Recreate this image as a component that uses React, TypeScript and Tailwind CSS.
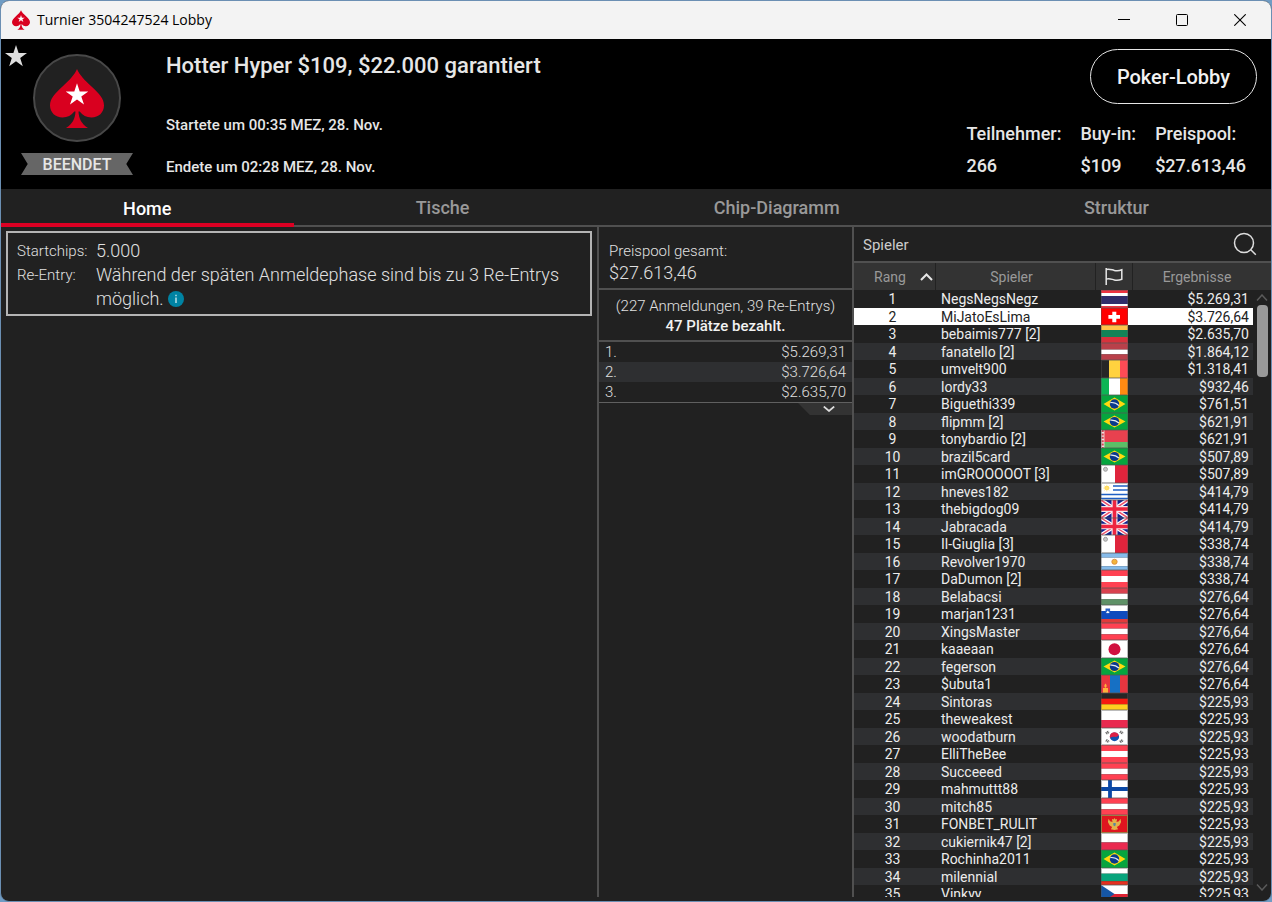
import type { ReactNode } from 'react';

type Player = [name: string, flag: string, result: string];

const players: Player[] = [
  ['NegsNegsNegz', 'th', '$5.269,31'],
  ['MiJatoEsLima', 'ch', '$3.726,64'],
  ['bebaimis777 [2]', 'lt', '$2.635,70'],
  ['fanatello [2]', 'lv', '$1.864,12'],
  ['umvelt900', 'be', '$1.318,41'],
  ['lordy33', 'ie', '$932,46'],
  ['Biguethi339', 'br', '$761,51'],
  ['flipmm [2]', 'br', '$621,91'],
  ['tonybardio [2]', 'by', '$621,91'],
  ['brazil5card', 'br', '$507,89'],
  ['imGROOOOOT [3]', 'mt', '$507,89'],
  ['hneves182', 'uy', '$414,79'],
  ['thebigdog09', 'gb', '$414,79'],
  ['Jabracada', 'gb', '$414,79'],
  ['Il-Giuglia [3]', 'mt', '$338,74'],
  ['Revolver1970', 'ar', '$338,74'],
  ['DaDumon [2]', 'at', '$338,74'],
  ['Belabacsi', 'hu', '$276,64'],
  ['marjan1231', 'si', '$276,64'],
  ['XingsMaster', 'at', '$276,64'],
  ['kaaeaan', 'jp', '$276,64'],
  ['fegerson', 'br', '$276,64'],
  ['$ubuta1', 'mn', '$276,64'],
  ['Sintoras', 'de', '$225,93'],
  ['theweakest', 'pl', '$225,93'],
  ['woodatburn', 'kr', '$225,93'],
  ['ElliTheBee', 'at', '$225,93'],
  ['Succeeed', 'at', '$225,93'],
  ['mahmuttt88', 'fi', '$225,93'],
  ['mitch85', 'at', '$225,93'],
  ['FONBET_RULIT', 'me', '$225,93'],
  ['cukiernik47 [2]', 'pl', '$225,93'],
  ['Rochinha2011', 'br', '$225,93'],
  ['milennial', 'bg', '$225,93'],
  ['Vinkyy', 'cz', '$225,93'],
];

const prizes = [
  ['1.', '$5.269,31'],
  ['2.', '$3.726,64'],
  ['3.', '$2.635,70'],
];

/* Horizontal stripes, each given as [height, colour]. */
function stripes(...bands: [number, string][]) {
  let y = 0;
  return bands.map(([h, c], i) => {
    const r = <rect key={i} x="0" y={y} width="27" height={h} fill={c} />;
    y += h;
    return r;
  });
}

const flags: Record<string, ReactNode> = {
  th: stripes([3, '#ef3340'], [3, '#fff'], [8, '#312d69'], [2, '#fff'], [2, '#ef3340']),
  ch: (
    <>
      <rect width="27" height="18" fill="#ff0000" />
      <path d="M11.3 4h4v3.4H19v4h-3.7V15h-4v-3.6H7.4v-4h3.9z" fill="#fff" />
    </>
  ),
  lt: stripes([5, '#ffc24a'], [7, '#128357'], [6, '#d8323c']),
  lv: stripes([7, '#b9404a'], [5, '#fff'], [6, '#b9404a']),
  be: (
    <>
      <rect width="8" height="18" fill="#262626" />
      <rect x="8" width="11" height="18" fill="#ffd23f" />
      <rect x="19" width="8" height="18" fill="#ff4b55" />
    </>
  ),
  ie: (
    <>
      <rect width="8" height="18" fill="#0cb555" />
      <rect x="8" width="11" height="18" fill="#fff" />
      <rect x="19" width="8" height="18" fill="#ff8a12" />
    </>
  ),
  br: (
    <>
      <rect width="27" height="18" fill="#06a53e" />
      <path d="M2.5 9L13.5 2.6 24.5 9 13.5 15.4z" fill="#ffd90f" />
      <circle cx="13.5" cy="9" r="4.7" fill="#0a3a8c" />
      <path d="M9.3 7.6q5-.6 8.6 3" stroke="#e6ecf4" strokeWidth="1.2" fill="none" />
    </>
  ),
  by: (
    <>
      {stripes([12, '#e8414f'], [6, '#5cbf67'])}
      <rect width="3.4" height="18" fill="#f0e0e0" />
      <path d="M1.7 0v18" stroke="#d64551" strokeWidth="2" strokeDasharray="2 1.4" />
    </>
  ),
  mt: (
    <>
      <rect width="14" height="18" fill="#fff" />
      <rect x="14" width="13" height="18" fill="#df243c" />
      <circle cx="4.5" cy="4.3" r="2" fill="#c9c9c9" stroke="#999" strokeWidth=".9" />
    </>
  ),
  uy: (
    <>
      <rect width="27" height="18" fill="#fff" />
      <path d="M12 3.2h15M12 7.4h15M0 12.2h27M0 16.4h27" stroke="#1f5fc4" strokeWidth="1.7" />
      <circle cx="5.8" cy="5.4" r="2.4" fill="#ffd84d" />
      <path d="M5.8 1.8v7.2M2.2 5.4h7.2M3.2 2.8l5.2 5.2M8.4 2.8L3.2 8" stroke="#ffe27a" strokeWidth=".7" />
    </>
  ),
  gb: (
    <>
      <rect width="27" height="18" fill="#11228f" />
      <path d="M0 0l27 18M27 0L0 18" stroke="#fff" strokeWidth="4" />
      <path d="M0 0l27 18M27 0L0 18" stroke="#f0506a" strokeWidth="1.5" />
      <path d="M13.5 0v18M0 9h27" stroke="#f7e3e8" strokeWidth="6" />
      <path d="M13.5 0v18M0 9h27" stroke="#ee2440" strokeWidth="3.6" />
    </>
  ),
  ar: (
    <>
      {stripes([5, '#86bbea'], [9, '#fff'], [4, '#86bbea'])}
      <circle cx="13.5" cy="9.3" r="2.7" fill="#f2b53c" stroke="#d9853a" strokeWidth=".8" />
    </>
  ),
  at: stripes([6, '#ff4152'], [6, '#fff'], [6, '#ff4152']),
  hu: stripes([6, '#d9414f'], [6, '#fff'], [6, '#5f9167']),
  si: (
    <>
      {stripes([6, '#fff'], [8, '#0f4bbd'], [4, '#e23a3a'])}
      <path d="M4.5 3.6h4.6v3.2q0 2-2.3 2.8-2.3-.8-2.3-2.8z" fill="#2c62c4" />
      <path d="M5 8l1.8-2.6L8.6 8z" fill="#fff" />
    </>
  ),
  jp: (
    <>
      <rect width="27" height="18" fill="#fff" />
      <circle cx="13.5" cy="9.3" r="6" fill="#d0103f" />
    </>
  ),
  mn: (
    <>
      <rect width="27" height="18" fill="#e8353f" />
      <rect x="9" width="10" height="18" fill="#1670c4" />
      <path d="M4.5 8.5q2.4 2.6 0 4.4-2.4-1.8 0-4.4zM2 13h5v5H2z" fill="#ffb03a" />
    </>
  ),
  de: stripes([6, '#262626'], [6, '#f51a10'], [6, '#ffcf1f']),
  pl: stripes([10, '#fff'], [8, '#e9294f']),
  kr: (
    <>
      <rect width="27" height="18" fill="#fff" />
      <circle cx="13.5" cy="9.3" r="4.6" fill="#1353ad" />
      <path d="M9 10.5a4.6 4.6 0 1 1 8.8-2.8q-1.8 2.2-4.3 1.6T9 10.5z" fill="#dd2045" />
      <path d="M5 5.8l3-2M19 3.8l3 2M5 12.8l3 2M19 14.8l3-2" stroke="#666" strokeWidth="2.8" strokeDasharray="1.2 .5" />
    </>
  ),
  fi: (
    <>
      <rect width="27" height="18" fill="#fff" />
      <path d="M9 0v18M0 9h27" stroke="#0a48a5" strokeWidth="3.8" />
    </>
  ),
  me: (
    <>
      <rect width="27" height="18" fill="#c9963f" />
      <rect x="1" y="1" width="25" height="16" fill="#e0151f" />
      <path d="M13.5 3l1 1.5 1.6-.6-.6 3 2.4-.6 1.6-2.6.6 3.4-1.8 3.4-2.4 1.6 1.2 2.2-3.6.6-3.6-.6 1.2-2.2-2.4-1.6-1.8-3.4.6-3.4 1.6 2.6 2.4.6-.6-3 1.6.6z" fill="#e3b24a" />
      <path d="M12.3 8h2.4v2.2l-1.2 1-1.2-1z" fill="#5b86a0" />
    </>
  ),
  bg: stripes([6, '#fff'], [8, '#08a47c'], [4, '#e4301f']),
  cz: (
    <>
      {stripes([9, '#fff'], [9, '#dd2233'])}
      <path d="M0 0l13.5 9L0 18z" fill="#1556a5" />
    </>
  ),
};

function Flag({ code }: { code: string }) {
  return (
    <svg viewBox="0 0 27 18" preserveAspectRatio="none" className="block h-full w-[27px]" aria-hidden="true">
      {flags[code]}
      <rect x=".5" y=".5" width="26" height="17" fill="none" stroke="#555" strokeOpacity=".4" />
    </svg>
  );
}

function Spade({ className }: { className: string }) {
  return (
    <svg viewBox="0 0 54 59" className={className} aria-hidden="true">
      <path
        d="M27 0C24.500 6 19 11.500 12.500 17.500 5 24.500 0 29.500 0 36.500 0 43.500 5.500 48.500 12.500 48.500c5 0 9-2.300 11.800-6h1.200C25.200 49.500 22.500 55 16 59h22c-6.500-4-9.200-9.500-9.500-16.500h1.200c2.800 3.700 6.800 6 11.800 6C48.500 48.500 54 43.500 54 36.500c0-7-5-12-12.500-19C35 11.500 29.500 6 27 0z"
        fill="#d9001f"
      />
      <path
        d="M27 14.2l2.700 8.200h8.600l-7 5 2.700 8.200-7-5.100-7 5.100 2.700-8.200-7-5h8.600z"
        fill="#fff"
      />
    </svg>
  );
}

function TitleBar() {
  const button = 'flex h-full w-[58px] items-center justify-center';
  return (
    <div className="flex h-[38px] shrink-0 items-center bg-[#f3f3f3] pl-[11px] pr-0.5 text-black">
      <Spade className="h-5 w-[18px]" />
      <h1 className="ml-[7px] font-['Open_Sans','Noto_Sans',sans-serif] text-sm">Turnier 3504247524 Lobby</h1>
      <div className="ml-auto flex h-full">
        <button type="button" aria-label="Minimieren" className={button}>
          <svg viewBox="0 0 12 12" className="size-3" stroke="currentColor" fill="none">
            <path d="M0 5.5h12" />
          </svg>
        </button>
        <button type="button" aria-label="Maximieren" className={button}>
          <svg viewBox="0 0 12 12" className="size-3" stroke="currentColor" fill="none">
            <rect x=".5" y=".5" width="11" height="11" rx="1" />
          </svg>
        </button>
        <button type="button" aria-label="Schließen" className={button}>
          <svg viewBox="0 0 12 12" className="size-3" stroke="currentColor" strokeWidth="1.1" fill="none">
            <path d="M.3.3l11.4 11.4M11.7.3L.3 11.7" />
          </svg>
        </button>
      </div>
    </div>
  );
}

function Stat({ label, value }: { label: string; value: string }) {
  return (
    <div>
      <dt>{label}</dt>
      <dd>{value}</dd>
    </div>
  );
}

function Header() {
  return (
    <header className="flex h-[150px] shrink-0 bg-black font-medium text-[#e6e6e6]">
      <button type="button" aria-label="Favorit" className="ml-1 mt-1.5 self-start">
        <svg viewBox="0 0 22 22" className="size-[22px]" fill="#dedede">
          <path d="M11 0l2.6 8H22l-6.8 5 2.6 8.3L11 16.3l-6.8 5L6.800 13 0 8h8.400z" />
        </svg>
      </button>
      <div className="-ml-[6px] flex w-[112px] flex-col items-center pt-[15px]">
        <div className="flex size-[88px] items-center justify-center rounded-full border-2 border-[#484848] bg-[#212121]">
          <Spade className="h-[59px] w-[54px]" />
        </div>
        <div className="mt-[11px] flex h-[22px] w-full items-center justify-center bg-[#666] pt-0.5 text-base leading-none [clip-path:polygon(0_0,100%_0,94%_50%,100%_100%,0_100%,6%_50%)]">
          BEENDET
        </div>
      </div>
      <div className="ml-[33px] pt-[15px]">
        <h2 className="text-[22px] leading-6">Hotter Hyper $109, $22.000 garantiert</h2>
        <p className="mt-[35px] text-[15px] leading-6">Startete um 00:35 MEZ, 28. Nov.</p>
        <p className="mt-[18px] text-[15px] leading-6">Endete um 02:28 MEZ, 28. Nov.</p>
      </div>
      <div className="ml-auto flex flex-col items-end pt-[10px]">
        <button
          type="button"
          className="mr-[14px] h-[55px] rounded-[28px] border border-[#e6e6e6] px-[26px] text-xl text-[#f2f2f2]"
        >
          Poker-Lobby
        </button>
        <dl className="mr-[25px] mt-[14px] flex gap-[19px] text-lg leading-8">
          <Stat label="Teilnehmer:" value="266" />
          <Stat label="Buy-in:" value="$109" />
          <Stat label="Preispool:" value="$27.613,46" />
        </dl>
      </div>
    </header>
  );
}

function Tabs() {
  const rest = 'flex-auto border-b-2 border-[#505050] pt-0.5 text-[#999]';
  return (
    <nav className="flex h-[38px] shrink-0 pr-0.5 text-lg font-medium">
      <button type="button" className="flex-auto border-b-4 border-[#dc0023] pt-1.5 text-white">Home</button>
      <button type="button" className={rest}>Tische</button>
      <button type="button" className={rest}>Chip-Diagramm</button>
      <button type="button" className={`${rest} -mr-0.5`}>Struktur</button>
    </nav>
  );
}

function InfoPanel() {
  return (
    <section className="min-w-0 flex-1 px-[5px] pt-1">
      <dl className="grid grid-cols-[79px_1fr] border-2 border-[#b4b4b4] px-[9px] pb-[3px] pt-1.5 font-light text-[#e0e0e0]">
        <dt className="text-[15px] leading-6">Startchips:</dt>
        <dd className="text-lg leading-6">5.000</dd>
        <dt className="text-[15px] leading-6">Re-Entry:</dt>
        <dd className="text-lg leading-6">
          Während der späten Anmeldephase sind bis zu 3 Re-Entrys möglich.
          <button type="button" aria-label="Info" className="ml-1 inline-block h-4 align-[-2px]">
            <svg viewBox="0 0 16 16" className="size-4">
              <circle cx="8" cy="8" r="8" fill="#0083a3" />
              <path d="M8 6.5v5.500M8 3.800v1.400" stroke="#d5eef3" strokeWidth="1.3" />
            </svg>
          </button>
        </dd>
      </dl>
    </section>
  );
}

function PrizePanel() {
  return (
    <section className="w-[257px] shrink-0 border-x-2 border-[#505050] font-light text-[#e0e0e0]">
      <div className="border-b-2 border-[#505050] pb-1 pl-[10px] pt-[13px]">
        <p className="text-[15px] leading-[22px]">Preispool gesamt:</p>
        <p className="text-lg leading-[22px]">$27.613,46</p>
      </div>
      <div className="border-b-2 border-[#505050] pb-1 pt-1.5 text-center text-[15px] leading-5">
        <p>(227 Anmeldungen, 39 Re-Entrys)</p>
        <p className="font-medium text-[#f2f2f2]">47 Plätze bezahlt.</p>
      </div>
      <table className="w-full text-[15px] leading-5">
        <tbody>
          {prizes.map(([place, sum]) => (
            <tr key={place} className="h-5 even:bg-[#2e2f31]">
              <td className="pl-[6px]">{place}</td>
              <td className="pr-[6px] text-right">{sum}</td>
            </tr>
          ))}
        </tbody>
      </table>
      <div className="flex justify-end border-t border-[#606060]">
        <button
          type="button"
          aria-label="Mehr anzeigen"
          className="flex h-3 w-[54px] items-center justify-center bg-[#333] pl-2 [clip-path:polygon(0_0,100%_0,100%_100%,22%_100%)]"
        >
          <svg viewBox="0 0 12 6" className="h-1.5 w-3" fill="none" stroke="#ddd" strokeWidth="1.7">
            <path d="M.8.5L6 5 11.2.5" />
          </svg>
        </button>
      </div>
    </section>
  );
}

function PlayerPanel() {
  return (
    <section className="flex w-[417px] shrink-0 flex-col overflow-hidden">
      <div className="flex h-[34px] shrink-0 items-center justify-between pl-[9px] pr-[14px]">
        <h3 className="pt-0.5 text-[15px] text-[#ccc]">Spieler</h3>
        <button type="button" aria-label="Suchen">
          <svg viewBox="0 0 24 24" className="size-6" fill="none" stroke="#ddd" strokeWidth="1.5">
            <circle cx="11" cy="11" r="9.5" />
            <path d="M17.8 17.8l5 5" />
          </svg>
        </button>
      </div>
      <div className="relative min-h-0 flex-1 overflow-hidden border-t-2 border-[#505050]">
        <table className="w-full table-fixed border-separate border-spacing-0">
          <colgroup>
            <col className="w-[82px]" />
            <col className="w-[160px]" />
            <col className="w-[37px]" />
            <col />
            <col className="w-[18px]" />
          </colgroup>
          <thead>
            <tr className="h-[27px] bg-[#333] text-sm text-[#999] *:border-r *:border-[#222] *:p-0 *:font-normal">
              <th scope="col">
                <button type="button" className="flex w-full items-center gap-[14px] pl-5">
                  Rang
                  <svg viewBox="0 0 13 8" className="h-2 w-[13px]" fill="none" stroke="#e6e6e6" strokeWidth="2">
                    <path d="M1 7l5.5-5.5L12 7" />
                  </svg>
                </button>
              </th>
              <th scope="col">
                <span className="pr-2">Spieler</span>
              </th>
              <th scope="col">
                <svg viewBox="0 0 18 17" className="ml-[9px] h-[17px] w-[18px]" fill="none" stroke="#e6e6e6" strokeWidth="1.5" role="img" aria-label="Land">
                  <path d="M1.2 0v17M1.2 1.5c3-1 5 .2 8 .9 2.5.6 5 .5 7.6-.6v9.5c-2.6 1-5.1 1.2-7.6.6-3-.7-5-1.8-8-.8" />
                </svg>
              </th>
              <th scope="col" colSpan={2} className="!border-r-0">
                <span className="pr-[10px]">Ergebnisse</span>
              </th>
            </tr>
          </thead>
          <tbody className="text-sm text-[#ececec]">
            {players.map(([name, flag, result], i) => {
              const selected = i === 1;
              const odd = i % 2 === 0;
              const height = odd ? 'h-[18px]' : 'h-[17px]';
              const line = odd ? 'leading-[17px]' : 'pt-px leading-4';
              const tone = selected ? 'bg-white text-[#222]' : odd ? '' : 'bg-[#2e2f31]';
              const cell = `${height} ${line} ${tone}`;
              return (
                <tr key={name}>
                  <td className={`${cell} pr-[5px] text-center`}>{i + 1}</td>
                  <td className={`${cell} pl-[5px]`}>{name}</td>
                  <td className={`${height} ${tone} p-0`}>
                    <div className={`${height} pl-[5px]`}>
                      <Flag code={flag} />
                    </div>
                  </td>
                  <td className={`${cell} pr-1 text-right`}>{result}</td>
                  <td className={`${height} p-0`} />
                </tr>
              );
            })}
          </tbody>
        </table>
        <div className="absolute bottom-0 right-0 top-[27px] flex w-[18px] flex-col items-center pb-[6px] pt-[4px]">
          <svg viewBox="0 0 12 7" className="h-[7px] w-3" fill="none" stroke="#5a5a5a" strokeWidth="1.5">
            <path d="M1 6.5l5-5.5 5 5.5" />
          </svg>
          <div className="mt-[4px] h-[72px] w-[11px] rounded-[4px] bg-[#999]" />
          <svg viewBox="0 0 12 7" className="mt-auto h-[7px] w-3" fill="none" stroke="#5a5a5a" strokeWidth="1.5">
            <path d="M1 .5L6 6l5-5.5" />
          </svg>
        </div>
      </div>
    </section>
  );
}

export default function App() {
  return (
    <div className="h-screen bg-[#6f9cc4] font-[Roboto,'Liberation_Sans',sans-serif]">
      <div className="flex h-full flex-col overflow-hidden rounded-[9px] border border-[#6b8fb3] bg-[#212121]">
        <TitleBar />
        <Header />
        <Tabs />
        <main className="mb-1 flex min-h-0 flex-1">
          <InfoPanel />
          <PrizePanel />
          <PlayerPanel />
        </main>
      </div>
    </div>
  );
}
